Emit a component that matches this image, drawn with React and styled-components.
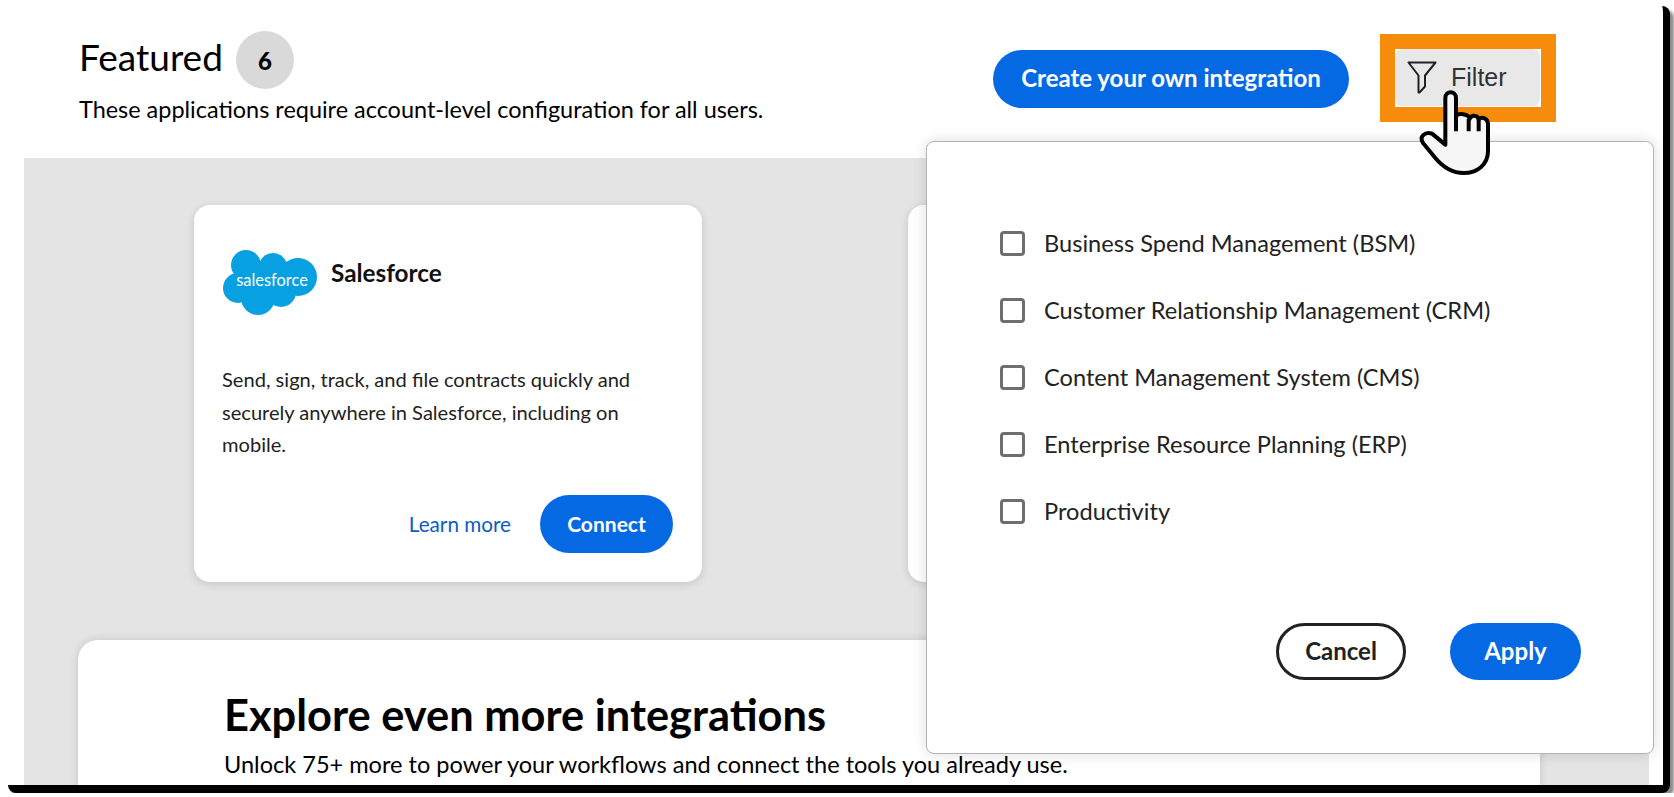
import React from 'react';
import styled, { createGlobalStyle } from 'styled-components';

const Global = createGlobalStyle`
  html, body { margin: 0; padding: 0; background: #fff; }
  body { font-family: Lato, "Noto Sans", sans-serif; color: #1a1a1a; }
  * { box-sizing: border-box; }
`;

const Frame = styled.div`
  position: relative;
  width: 1662px;
  height: 787px;
  margin: 6px 0 0 8px;
  background: #fff;
  border-right: 7px solid #000;
  border-bottom: 8px solid #000;
  border-radius: 0 8px 8px 8px;
  box-shadow: 4px 4px 3px rgba(0, 0, 0, 0.45);
  overflow: hidden;
`;

const Header = styled.header`
  display: flex;
  justify-content: space-between;
  align-items: flex-start;
  height: 152px;
  padding: 25px 107px 0 71px;
`;

const TitleRow = styled.div`
  display: flex;
  align-items: center;
  gap: 13px;
  height: 58px;
`;

const Title = styled.h1`
  margin: -8px 0 0;
  font-size: 37px;
  font-weight: 400;
  color: #000;
`;

const Badge = styled.span`
  display: flex;
  align-items: center;
  justify-content: center;
  width: 58px;
  height: 58px;
  border-radius: 50%;
  background: #d9d9d9;
  font-size: 24px;
  font-weight: 900;
  color: #000;
`;

const Subtitle = styled.p`
  margin: 6px 0 0;
  font-size: 23.45px;
  color: #000;
`;

const Actions = styled.div`
  display: flex;
  align-items: center;
  gap: 31px;
  margin-top: 3px;
`;

const PrimaryButton = styled.button`
  height: ${(props) => props.$height || 58}px;
  width: ${(props) => props.$width}px;
  padding: 0 0 2px;
  border: none;
  border-radius: 29px;
  background: #0669e4;
  color: #fff;
  font-family: inherit;
  font-size: ${(props) => props.$size || 21}px;
  font-weight: 700;
`;

const CreateButton = styled(PrimaryButton)`
  margin-top: 2px;
  padding-bottom: 4px;
`;

const FilterButton = styled.button`
  width: 176px;
  height: 88px;
  padding: 0 1px 1px 0;
  border: 15px solid #f78c0c;
  border-radius: 0;
  background: #fff;
  font-family: "Liberation Sans", Arial, sans-serif;
  font-size: 25px;
  color: #333;
`;

const FilterInner = styled.span`
  display: flex;
  align-items: center;
  width: 100%;
  height: 100%;
  padding-left: 12px;
  border-radius: 7px;
  background: #e8e8e8;
`;

const FunnelIcon = styled.svg`
  width: 30px;
  height: 34px;
  margin-right: 14px;
`;

const Gallery = styled.section`
  height: 627px;
  margin: 0 14px 0 16px;
  padding-top: 47px;
  background: #e4e4e4;
`;

const CardRow = styled.div`
  display: flex;
  gap: 206px;
  padding-left: 170px;
  height: 377px;
`;

const Card = styled.article`
  flex: none;
  display: flex;
  flex-direction: column;
  width: 508px;
  height: 377px;
  padding: 45px 29px 29px 28px;
  background: #fff;
  border-radius: 16px;
  box-shadow: 0 2px 8px rgba(0, 0, 0, 0.14);
`;

const CardHead = styled.div`
  display: flex;
  align-items: flex-start;
  gap: 14px;
  height: 65px;
`;

const CardName = styled.h2`
  margin: 8px 0 0;
  font-size: 24.3px;
  font-weight: 700;
  color: #111;
`;

const CardText = styled.p`
  margin: 48px 0 0;
  font-size: 20.1px;
  line-height: 32.6px;
  color: #222;
`;

const CardFoot = styled.div`
  display: flex;
  justify-content: flex-end;
  align-items: center;
  gap: 29px;
  margin-top: auto;
`;

const LearnMore = styled.a`
  font-size: 20.7px;
  color: #0a5cc4;
`;

const Promo = styled.div`
  height: 200px;
  margin: 58px 109px 0 54px;
  padding: 48px 0 0 146px;
  background: #fff;
  border-radius: 20px 20px 0 0;
  box-shadow: 0 0 8px rgba(0, 0, 0, 0.14);
`;

const PromoTitle = styled.h2`
  margin: 0;
  font-size: 43.4px;
  font-weight: 700;
  color: #000;
`;

const PromoText = styled.p`
  margin: 10px 0 0;
  font-size: 23.55px;
  color: #000;
`;

const Panel = styled.div`
  position: absolute;
  left: 918px;
  top: 135px;
  width: 728px;
  height: 613px;
  display: flex;
  flex-direction: column;
  justify-content: space-between;
  padding: 89px 72px 73px 73px;
  background: #fff;
  border: 1px solid #b4b4b4;
  border-radius: 8px;
  box-shadow: 0 0 14px rgba(0, 0, 0, 0.14);
`;

const OptionList = styled.div`
  display: flex;
  flex-direction: column;
  gap: 42px;
`;

const Option = styled.label`
  display: flex;
  align-items: center;
  gap: 19px;
  height: 25px;
  font-size: 23.6px;
  color: #222;
`;

const OptionLabel = styled.span`
  margin-top: -2px;
`;

const Box = styled.span`
  flex: none;
  width: 25px;
  height: 25px;
  border: 3px solid #6e6e6e;
  border-radius: 4px;
`;

const PanelFoot = styled.div`
  display: flex;
  justify-content: flex-end;
  gap: 44px;
`;

const CancelButton = styled.button`
  width: 130px;
  height: 57px;
  padding: 0 0 2px;
  border: 3px solid #222;
  border-radius: 29px;
  background: #fff;
  color: #222;
  font-family: inherit;
  font-size: 24px;
  font-weight: 700;
`;

const Cursor = styled.svg`
  position: absolute;
  left: 1408.7px;
  top: 82.3px;
  width: 76.7px;
  height: 90px;
`;

const options = [
  'Business Spend Management (BSM)',
  'Customer Relationship Management (CRM)',
  'Content Management System (CMS)',
  'Enterprise Resource Planning (ERP)',
  'Productivity',
];

function SalesforceLogo() {
  return (
    <svg width="95" height="65" viewBox="0 0 95 65">
      <g fill="#07a0e0">
        <circle cx="24" cy="15" r="15" />
        <circle cx="51" cy="17" r="14" />
        <circle cx="76" cy="27" r="19" />
        <circle cx="16" cy="38" r="15" />
        <circle cx="36" cy="48" r="17" />
        <circle cx="59" cy="42" r="15" />
        <ellipse cx="46" cy="30" rx="30" ry="18" />
      </g>
      <text x="50" y="36" textAnchor="middle" fontSize="16.4" fill="#fff" fontFamily="Lato, sans-serif">
        salesforce
      </text>
    </svg>
  );
}

function App() {
  return (
    <>
      <Global />
      <Frame>
        <Header>
          <div>
            <TitleRow>
              <Title>Featured</Title>
              <Badge>6</Badge>
            </TitleRow>
            <Subtitle>These applications require account-level configuration for all users.</Subtitle>
          </div>
          <Actions>
            <CreateButton $width={356} $size={24}>Create your own integration</CreateButton>
            <FilterButton>
              <FilterInner>
                <FunnelIcon viewBox="0 0 30 34" fill="none" stroke="#222" strokeWidth="2" strokeLinejoin="round">
                  <path d="M1.5 1.5H28.5L18 14.5V25.5L12.5 31.5H11.5V14.5Z" />
                </FunnelIcon>
                Filter
              </FilterInner>
            </FilterButton>
          </Actions>
        </Header>

        <Gallery>
          <CardRow>
            <Card>
              <CardHead>
                <SalesforceLogo />
                <CardName>Salesforce</CardName>
              </CardHead>
              <CardText>
                Send, sign, track, and file contracts quickly and securely anywhere in Salesforce, including on mobile.
              </CardText>
              <CardFoot>
                <LearnMore>Learn more</LearnMore>
                <PrimaryButton $width={133}>Connect</PrimaryButton>
              </CardFoot>
            </Card>
            <Card />
          </CardRow>
          <Promo>
            <PromoTitle>Explore even more integrations</PromoTitle>
            <PromoText>Unlock 75+ more to power your workflows and connect the tools you already use.</PromoText>
          </Promo>
        </Gallery>

        <Panel>
          <OptionList>
            {options.map((option) => (
              <Option key={option}>
                <Box />
                <OptionLabel>{option}</OptionLabel>
              </Option>
            ))}
          </OptionList>
          <PanelFoot>
            <CancelButton>Cancel</CancelButton>
            <PrimaryButton $width={131} $height={57} $size={24}>Apply</PrimaryButton>
          </PanelFoot>
        </Panel>

        <Cursor viewBox="230 205 230 270" fill="#f6f6f6" stroke="#000" strokeWidth="12" strokeLinejoin="round" strokeLinecap="round">
          <path d="M315 370V235C315 212 347 212 347 235V290C352 280 385 280 388 298C392 285 412 285 415 300C420 290 443 293 443 315V395C443 435 410 460 370 460C335 460 310 445 285 415L248 370C235 350 255 335 275 342L315 375Z" />
          <path d="M347 285V335M385 298V335M415 300V335" fill="none" strokeLinecap="butt" />
        </Cursor>
      </Frame>
    </>
  );
}

export default App;
